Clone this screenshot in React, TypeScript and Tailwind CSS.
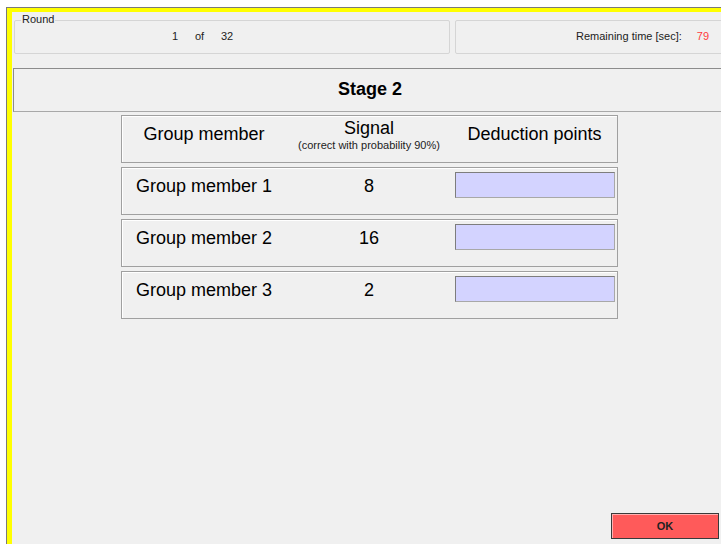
import React, { useState } from 'react';

interface MemberRow {
  label: string;
  signal: number;
}

const members: MemberRow[] = [
  { label: 'Group member 1', signal: 8 },
  { label: 'Group member 2', signal: 16 },
  { label: 'Group member 3', signal: 2 },
];

const font = 'font-["Liberation_Sans",Arial,sans-serif]';

export default function App() {
  const [deductions, setDeductions] = useState<string[]>(['', '', '']);

  const updateDeduction = (index: number, value: string) => {
    setDeductions((prev) => prev.map((v, i) => (i === index ? value : v)));
  };

  return (
    <div className={`w-[721px] h-[544px] overflow-hidden bg-white pt-[7px] pl-[6px] text-black ${font}`}>
      {/* Window frame: gray edge then the yellow client border */}
      <div className="w-[760px] h-[560px] border-t border-l border-[#7a7a7a]">
        <div className="h-full border-t-[4px] border-l-[5px] border-[#ffff00] bg-[#f0f0f0]">
          {/* Header: round counter and timer */}
          <div className="flex pt-[8px] pl-[2px] gap-[5px]">
            <div className="relative w-[436px] h-[34px] border border-[#d5d5d5] rounded-[2px]">
              <span className="absolute -top-[8px] left-[6px] bg-[#f0f0f0] px-[1px] text-[11px] leading-[13px] text-[#222]">
                Round
              </span>
              <div className="flex h-full items-center pl-[157px] pb-[1px] text-[11px] text-[#222]">
                <span className="w-[23px]">1</span>
                <span className="w-[26px]">of</span>
                <span>32</span>
              </div>
            </div>
            <div className="w-[300px] h-[34px] border border-[#d5d5d5] rounded-[2px] flex items-center pl-[120px] pb-[1px] text-[11px] text-[#222]">
              <span>Remaining time [sec]:</span>
              <span className="ml-[15px] text-[#ff3b3b]">79</span>
            </div>
          </div>

          {/* Stage title */}
          <div className="mt-[14px] ml-[1px] w-[760px] h-[44px] border border-[#8c8c8c] border-b-[#a8a8a8] flex items-center">
            <span className="w-[712px] text-center text-[18px] font-bold pb-[1px]">Stage 2</span>
          </div>

          {/* Deduction table */}
          <div className="mt-[3px] ml-[109px] w-[497px] flex flex-col gap-[4px]">
            <div className="h-[48px] border border-[#a0a0a0] shadow-[inset_1px_1px_0_#ffffff] grid grid-cols-[164px_166px_165px]">
              <div className="flex justify-center pt-[8px] text-[18px] leading-[21px]">Group member</div>
              <div className="flex flex-col items-center pt-[2px]">
                <span className="text-[18px] leading-[21px]">Signal</span>
                <span className="text-[11px] leading-[12px] text-[#222]">(correct with probability 90%)</span>
              </div>
              <div className="flex justify-center pt-[8px] text-[18px] leading-[21px]">Deduction points</div>
            </div>

            {members.map((m, i) => (
              <div
                key={m.label}
                className="h-[48px] border border-[#a0a0a0] shadow-[inset_1px_1px_0_#ffffff] grid grid-cols-[164px_166px_165px]"
              >
                <div className="flex justify-center pt-[8px] text-[18px] leading-[21px]">{m.label}</div>
                <div className="flex justify-center pt-[8px] text-[18px] leading-[21px]">{m.signal}</div>
                <div className="pt-[4px] pl-[3px]">
                  <input
                    value={deductions[i]}
                    autoFocus={i === members.length - 1}
                    onChange={(e) => updateDeduction(i, e.target.value)}
                    className="block w-[160px] h-[26px] bg-[#d3d3ff] border border-[#7d7d7d] border-r-[#a8a8a8] border-b-[#a8a8a8] outline-none text-center text-[13px] caret-black"
                  />
                </div>
              </div>
            ))}
          </div>

          {/* Confirm */}
          <div className="mt-[194px] ml-[599px]">
            <button className="w-[108px] h-[26px] bg-[#ff5a5a] border border-[#3a3a3a] shadow-[inset_1px_1px_0_#ffb0b0] text-[11px] font-bold text-[#222]">
              OK
            </button>
          </div>
        </div>
      </div>
    </div>
  );
}
